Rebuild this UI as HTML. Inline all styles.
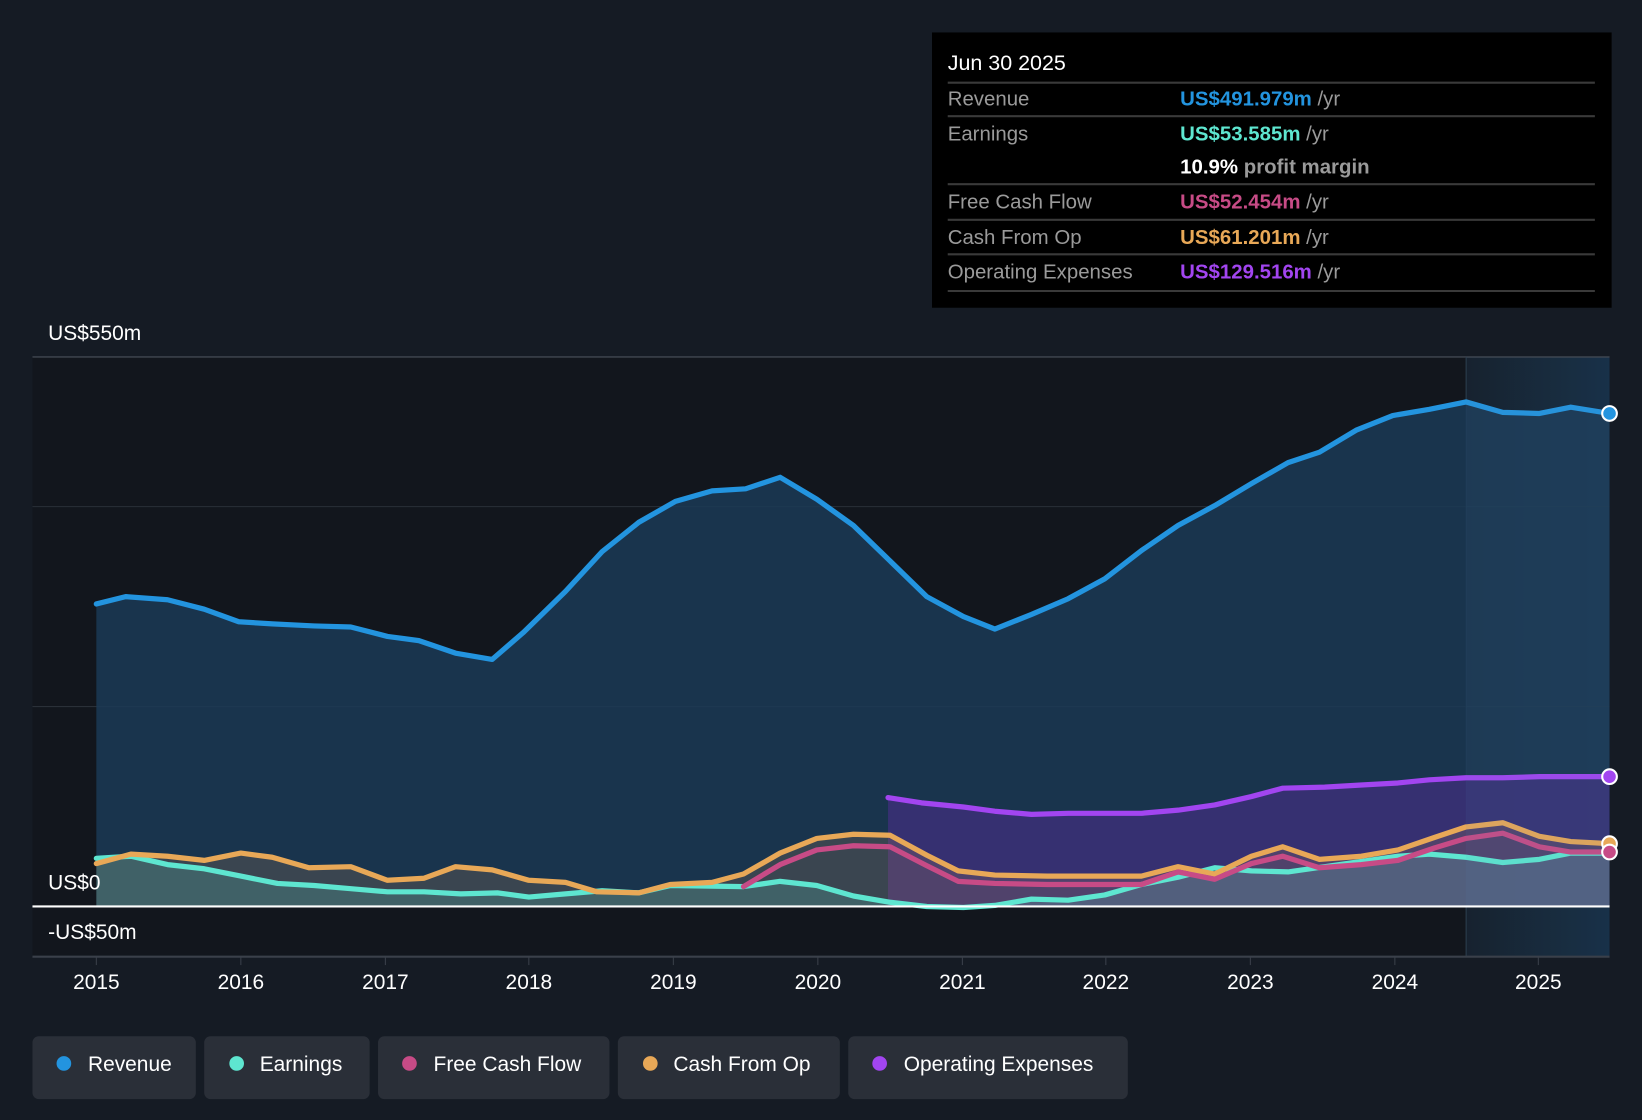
<!DOCTYPE html>
<html><head><meta charset="utf-8"><style>
html,body{margin:0;padding:0;background:#151b24;}
svg{display:block;}
text{font-family:"Liberation Sans",sans-serif;}
</style></head><body>
<svg width="1642" height="1120" viewBox="0 0 1568 1070" preserveAspectRatio="none" xmlns="http://www.w3.org/2000/svg">
<defs>
<linearGradient id="rg" x1="0" y1="0" x2="1" y2="0"><stop offset="0" stop-color="#121a24"/><stop offset="1" stop-color="#132a40"/></linearGradient>
</defs>
<rect width="1568" height="1070" fill="#151b24"/>
<rect x="31" y="341" width="1369" height="573" fill="#12161d"/>
<rect x="1400" y="341" width="137" height="573" fill="url(#rg)"/>
<line x1="31" y1="341" x2="1537" y2="341" stroke="#3a404a" stroke-width="1.5"/>
<line x1="31" y1="484" x2="1537" y2="484" stroke="#2a3038" stroke-width="1"/>
<line x1="31" y1="675" x2="1537" y2="675" stroke="#2a3038" stroke-width="1"/>
<line x1="1400" y1="341" x2="1400" y2="914" stroke="#2a3a4a" stroke-width="1"/>

<polygon fill="#1b3a56" fill-opacity="0.85" points="92,866 92,577 120,570 160,573 195,582 228,594 260,596 300,598 335,599 370,608 400,612 435,624 470,630 500,604 540,565 575,527 610,499 645,479 680,469 712,467 745,456 780,477 815,502 850,536 885,570 920,589 950,601 985,587 1020,572 1055,553 1090,526 1125,502 1160,483 1195,462 1230,442 1260,432 1295,411 1330,397 1365,391 1400,384 1435,394 1470,395 1500,389 1537,395 1537,866"/>
<polygon fill="#4a2f8a" fill-opacity="0.6" points="848,866 848,762 880,767 920,771 950,775 985,778 1020,777 1090,777 1125,774 1160,769 1195,761 1225,753 1265,752 1300,750 1335,748 1365,745 1400,743 1435,743 1470,742 1537,742 1537,866"/>
<polygon fill="#a0785a" fill-opacity="0.25" points="92,866 92,825 125,816 160,818 195,822 230,815 260,819 295,829 335,828 370,841 405,839 435,828 470,831 505,841 540,843 570,852 610,853 640,845 680,843 710,835 745,815 780,801 815,797 850,798 885,817 915,832 950,836 1000,837 1090,837 1125,828 1160,835 1195,818 1225,809 1260,821 1300,818 1335,812 1370,800 1400,790 1435,786 1470,799 1500,804 1537,806 1537,866"/>
<polygon fill="#5ee6d0" fill-opacity="0.18" points="92,866 92,820 125,818 160,826 195,830 230,837 265,844 300,846 335,849 370,852 405,852 440,854 475,853 505,857 540,854 575,851 610,853 640,846 710,847 745,842 780,846 815,856 850,862 885,866 920,867 950,865 985,859 1020,860 1055,855 1090,845 1125,838 1160,829 1195,832 1230,833 1265,828 1300,823 1335,818 1365,816 1400,819 1435,824 1470,821 1500,815 1537,815 1537,866"/>

<g fill="none" stroke-width="5" stroke-linejoin="round" stroke-linecap="round">
<polyline stroke="#5ee6d0" points="92,820 125,818 160,826 195,830 230,837 265,844 300,846 335,849 370,852 405,852 440,854 475,853 505,857 540,854 575,851 610,853 640,846 710,847 745,842 780,846 815,856 850,862 885,866 920,867 950,865 985,859 1020,860 1055,855 1090,845 1125,838 1160,829 1195,832 1230,833 1265,828 1300,823 1335,818 1365,816 1400,819 1435,824 1470,821 1500,815 1537,815"/>
<polyline stroke="#e8a857" points="92,825 125,816 160,818 195,822 230,815 260,819 295,829 335,828 370,841 405,839 435,828 470,831 505,841 540,843 570,852 610,853 640,845 680,843 710,835 745,815 780,801 815,797 850,798 885,817 915,832 950,836 1000,837 1090,837 1125,828 1160,835 1195,818 1225,809 1260,821 1300,818 1335,812 1370,800 1400,790 1435,786 1470,799 1500,804 1537,806"/>
<polyline stroke="#c74b86" points="710,847 745,826 780,812 815,808 850,809 885,827 915,842 950,844 1000,845 1090,845 1125,833 1160,840 1195,825 1225,818 1260,829 1300,826 1335,822 1370,810 1400,801 1435,796 1470,809 1500,814 1537,814"/>
<polyline stroke="#a245f0" points="848,762 880,767 920,771 950,775 985,778 1020,777 1090,777 1125,774 1160,769 1195,761 1225,753 1265,752 1300,750 1335,748 1365,745 1400,743 1435,743 1470,742 1537,742"/>
<polyline stroke="#2394df" points="92,577 120,570 160,573 195,582 228,594 260,596 300,598 335,599 370,608 400,612 435,624 470,630 500,604 540,565 575,527 610,499 645,479 680,469 712,467 745,456 780,477 815,502 850,536 885,570 920,589 950,601 985,587 1020,572 1055,553 1090,526 1125,502 1160,483 1195,462 1230,442 1260,432 1295,411 1330,397 1365,391 1400,384 1435,394 1470,395 1500,389 1537,395"/>
</g>
<rect x="1400" y="341" width="137" height="573" fill="#5a8ab0" fill-opacity="0.08"/>

<line x1="31" y1="866" x2="1537" y2="866" stroke="#ffffff" stroke-width="2"/>
<line x1="31" y1="914" x2="1537" y2="914" stroke="#3a404a" stroke-width="2"/>
<g stroke="#3a404a" stroke-width="1">
<line x1="92" y1="914" x2="92" y2="922"/><line x1="230" y1="914" x2="230" y2="922"/><line x1="368" y1="914" x2="368" y2="922"/><line x1="505" y1="914" x2="505" y2="922"/><line x1="643" y1="914" x2="643" y2="922"/><line x1="781" y1="914" x2="781" y2="922"/><line x1="919" y1="914" x2="919" y2="922"/><line x1="1056" y1="914" x2="1056" y2="922"/><line x1="1194" y1="914" x2="1194" y2="922"/><line x1="1332" y1="914" x2="1332" y2="922"/><line x1="1469" y1="914" x2="1469" y2="922"/>
</g>
<circle cx="1537" cy="395" r="7" fill="#2394df" stroke="#fff" stroke-width="2"/>
<circle cx="1537" cy="742" r="7" fill="#a245f0" stroke="#fff" stroke-width="2"/>
<circle cx="1537" cy="806" r="7" fill="#e8a857" stroke="#fff" stroke-width="2"/>
<circle cx="1537" cy="814" r="7" fill="#c74b86" stroke="#fff" stroke-width="2"/>

<g fill="#ffffff" font-size="20">
<text x="46" y="325">US$550m</text>
<text x="46" y="850">US$0</text>
<text x="46" y="897">-US$50m</text>
</g>
<g fill="#ffffff" font-size="20" text-anchor="middle">
<text x="92" y="945">2015</text><text x="230" y="945">2016</text><text x="368" y="945">2017</text><text x="505" y="945">2018</text><text x="643" y="945">2019</text><text x="781" y="945">2020</text><text x="919" y="945">2021</text><text x="1056" y="945">2022</text><text x="1194" y="945">2023</text><text x="1332" y="945">2024</text><text x="1469" y="945">2025</text>
</g>

<rect x="890" y="31" width="649" height="263" fill="#000"/>
<text x="905" y="67" fill="#fff" font-size="20.5">Jun 30 2025</text>
<g stroke="#3a3a3a" stroke-width="2">
<line x1="905" y1="79" x2="1523" y2="79"/><line x1="905" y1="111" x2="1523" y2="111"/><line x1="905" y1="176" x2="1523" y2="176"/><line x1="905" y1="210" x2="1523" y2="210"/><line x1="905" y1="243" x2="1523" y2="243"/><line x1="905" y1="278" x2="1523" y2="278"/>
</g>
<g font-size="19.5" fill="#9a9a9a">
<text x="905" y="101">Revenue</text>
<text x="905" y="134">Earnings</text>
<text x="905" y="199">Free Cash Flow</text>
<text x="905" y="233">Cash From Op</text>
<text x="905" y="266">Operating Expenses</text>
</g>
<g font-size="19.5" font-weight="bold">
<text x="1127" y="101"><tspan fill="#2394df">US$491.979m</tspan><tspan fill="#9a9a9a" font-weight="normal"> /yr</tspan></text>
<text x="1127" y="134"><tspan fill="#5ee6d0">US$53.585m</tspan><tspan fill="#9a9a9a" font-weight="normal"> /yr</tspan></text>
<text x="1127" y="166"><tspan fill="#fff">10.9%</tspan><tspan fill="#9a9a9a"> profit margin</tspan></text>
<text x="1127" y="199"><tspan fill="#c74b86">US$52.454m</tspan><tspan fill="#9a9a9a" font-weight="normal"> /yr</tspan></text>
<text x="1127" y="233"><tspan fill="#e8a857">US$61.201m</tspan><tspan fill="#9a9a9a" font-weight="normal"> /yr</tspan></text>
<text x="1127" y="266"><tspan fill="#a245f0">US$129.516m</tspan><tspan fill="#9a9a9a" font-weight="normal"> /yr</tspan></text>
</g>

<g fill="#2a2f38">
<rect x="31" y="990" width="156" height="60" rx="6"/>
<rect x="195" y="990" width="158" height="60" rx="6"/>
<rect x="361" y="990" width="221" height="60" rx="6"/>
<rect x="590" y="990" width="212" height="60" rx="6"/>
<rect x="810" y="990" width="267" height="60" rx="6"/>
</g>
<circle cx="61" cy="1016" r="7" fill="#2394df"/>
<circle cx="226" cy="1016" r="7" fill="#5ee6d0"/>
<circle cx="391" cy="1016" r="7" fill="#c74b86"/>
<circle cx="621" cy="1016" r="7" fill="#e8a857"/>
<circle cx="840" cy="1016" r="7" fill="#a245f0"/>
<g fill="#fff" font-size="20">
<text x="84" y="1023">Revenue</text>
<text x="248" y="1023">Earnings</text>
<text x="414" y="1023">Free Cash Flow</text>
<text x="643" y="1023">Cash From Op</text>
<text x="863" y="1023">Operating Expenses</text>
</g>
</svg>
</body></html>
